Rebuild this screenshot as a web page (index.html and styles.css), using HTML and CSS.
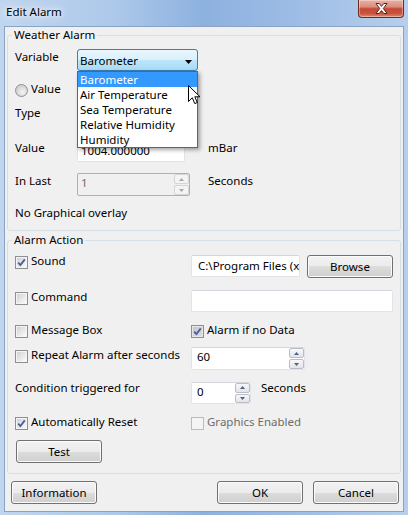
FILE: index.html
```html
<!DOCTYPE html>
<html>
<head>
<meta charset="utf-8">
<title>Edit Alarm</title>
<link rel="stylesheet" href="styles.css">
</head>
<body>
<div class="window">
  <div class="titlebar">
    <span class="title">Edit Alarm</span>
    <div class="close">
      <svg width="13" height="11" viewBox="0 0 13 11"><path d="M1 0.5H4.2L6.5 3.4L8.8 0.5H12L8.3 5.5L12 10.5H8.8L6.5 7.6L4.2 10.5H1L4.7 5.5Z" fill="#fff" stroke="#5b2218" stroke-width="1" stroke-linejoin="round"/></svg>
    </div>
  </div>
  <div class="client">
    <fieldset class="group g1">
      <legend>Weather Alarm</legend>
      <div class="row r-var">
        <span class="lbl">Variable</span>
        <div class="combo-wrap">
          <div class="combo"><span>Barometer</span><svg class="arrow" width="7" height="4" viewBox="0 0 7 4"><path d="M0 0H7L3.5 4Z" fill="#000"/></svg></div>
          <ul class="dropdown">
            <li class="sel">Barometer</li>
            <li>Air Temperature</li>
            <li>Sea Temperature</li>
            <li>Relative Humidity</li>
            <li>Humidity</li>
          </ul>
          <svg class="cursor" width="13" height="20" viewBox="0 0 13 20"><path d="M0.5 0.5V16.5L4.3 12.8L6.8 18.6L9.3 17.5L6.8 11.8H12Z" fill="#fff" stroke="#000" stroke-width="1" stroke-linejoin="miter"/></svg>
        </div>
      </div>
      <div class="row r-radio"><span class="radio"></span><span>Value</span></div>
      <div class="row r-type"><span class="lbl">Type</span></div>
      <div class="row r-value">
        <span class="lbl">Value</span>
        <div class="textbox tb-value">1004.000000</div>
        <span class="unit u-mbar">mBar</span>
      </div>
      <div class="row r-last">
        <span class="lbl">In Last</span>
        <div class="spin spin-last disabled">
          <span class="spin-text">1</span>
          <span class="spin-btns">
            <span class="sb"><svg width="5" height="3" viewBox="0 0 5 3"><path d="M0 3H5L2.5 0Z"/></svg></span>
            <span class="sb"><svg width="5" height="3" viewBox="0 0 5 3"><path d="M0 0H5L2.5 3Z"/></svg></span>
          </span>
        </div>
        <span class="unit u-sec">Seconds</span>
      </div>
      <div class="row r-nog">No Graphical overlay</div>
    </fieldset>

    <fieldset class="group g2">
      <legend>Alarm Action</legend>
      <div class="row r-sound">
        <label class="check c1"><span class="cb"><svg width="9" height="9" viewBox="0 0 9 9"><path d="M1.2 4.6L3.4 7L7.8 1.4" fill="none" stroke="#4a5f97" stroke-width="1.8"/></svg></span>Sound</label>
        <div class="textbox tb-sound">C:\Program Files (x</div>
        <div class="btn btn-browse">Browse</div>
      </div>
      <div class="row r-cmd">
        <label class="check c1"><span class="cb"></span>Command</label>
        <div class="textbox tb-cmd"></div>
      </div>
      <div class="row r-msg">
        <label class="check c1"><span class="cb"></span>Message Box</label>
        <label class="check"><span class="cb cb-grey"><svg width="9" height="9" viewBox="0 0 9 9"><path d="M1.2 4.6L3.4 7L7.8 1.4" fill="none" stroke="#4a5f97" stroke-width="1.8"/></svg></span>Alarm if no Data</label>
      </div>
      <div class="row r-rep">
        <label class="check c1"><span class="cb"></span>Repeat Alarm after seconds</label>
        <div class="spin spin-rep">
          <span class="spin-text">60</span>
          <span class="spin-btns">
            <span class="sb"><svg width="5" height="3" viewBox="0 0 5 3"><path d="M0 3H5L2.5 0Z"/></svg></span>
            <span class="sb"><svg width="5" height="3" viewBox="0 0 5 3"><path d="M0 0H5L2.5 3Z"/></svg></span>
          </span>
        </div>
      </div>
      <div class="row r-cond">
        <span class="c1">Condition triggered for</span>
        <div class="spin spin-cond">
          <span class="spin-text">0</span>
          <span class="spin-btns">
            <span class="sb"><svg width="5" height="3" viewBox="0 0 5 3"><path d="M0 3H5L2.5 0Z"/></svg></span>
            <span class="sb"><svg width="5" height="3" viewBox="0 0 5 3"><path d="M0 0H5L2.5 3Z"/></svg></span>
          </span>
        </div>
        <span class="unit u-sec2">Seconds</span>
      </div>
      <div class="row r-auto">
        <label class="check c1"><span class="cb"><svg width="9" height="9" viewBox="0 0 9 9"><path d="M1.2 4.6L3.4 7L7.8 1.4" fill="none" stroke="#4a5f97" stroke-width="1.8"/></svg></span>Automatically Reset</label>
        <label class="check disabled"><span class="cb cb-dis"></span>Graphics Enabled</label>
      </div>
      <div class="row r-test"><div class="btn btn-test">Test</div></div>
    </fieldset>

    <div class="buttons">
      <div class="btn">Information</div>
      <div class="spacer"></div>
      <div class="btn">OK</div>
      <div class="btn">Cancel</div>
    </div>
  </div>
</div>
</body>
</html>
```

FILE: styles.css
```css
* { box-sizing: border-box; }
html, body { margin: 0; padding: 0; }
body {
  font-family: "Noto Sans", "Open Sans", sans-serif;
  font-size: 11.5px;
  line-height: 15px;
  color: #000;
  background: #fff;
}
.window {
  width: 408px;
  height: 515px;
  display: flex;
  flex-direction: column;
  background: linear-gradient(90deg, #c0d6ef 0%, #adc8ea 28%, #8db1df 50%, #9dbce5 72%, #b7cfec 100%);
  overflow: hidden;
}
.titlebar {
  height: 26px;
  flex: none;
  display: flex;
  align-items: flex-start;
  padding: 0 4px 0 6px;
}
.title {
  margin-top: 4px;
  text-shadow: 0 0 5px #fff, 0 0 9px rgba(255,255,255,.9), 0 0 14px rgba(255,255,255,.7);
}
.close {
  margin-left: auto;
  width: 46px;
  height: 18px;
  border: 1px solid #6e2a20;
  border-top: none;
  border-radius: 0 0 4px 4px;
  background: linear-gradient(#eab1a6 0%, #dc8c7c 40%, #c44a35 52%, #c9513b 78%, #de8a6c 100%);
  box-shadow: inset 0 0 0 1px rgba(255,255,255,.35);
  display: flex;
  align-items: center;
  justify-content: center;
}
.client {
  flex: 1;
  margin: 0 4px 3px;
  background: #f0f0f0;
  border: 1px solid #8aa3c2;
  display: flex;
  flex-direction: column;
}
.group {
  margin: 0 2px;
  padding: 0 0 10px 7px;
  border: 1px solid #d5dfe5;
  border-radius: 3px;
  min-width: 0;
}
.group legend {
  margin-left: -3px;
  padding: 0 2px 2px;
  line-height: 15px;
}
.g2 { margin-top: 1px; }
.row {
  display: flex;
  align-items: flex-start;
  white-space: nowrap;
}
.lbl { width: 62px; flex: none; }
.unit { flex: none; }

/* group 1 rows */
.r-var { margin-top: 5px; height: 22px; }
.r-radio { margin-top: 10px; height: 15px; }
.r-type { margin-top: 9px; height: 15px; }
.r-value { margin-top: 20px; }
.r-last { margin-top: 11px; }
.r-nog { margin-top: 9px; height: 15px; }

.combo-wrap { position: relative; }
.combo {
  width: 121px;
  height: 22px;
  border: 1px solid #3c7fb1;
  border-radius: 3px;
  background: linear-gradient(#eaf6fd 0%, #d9f0fc 50%, #bee6fd 50%, #a7d9f5 100%);
  padding: 3px 5px 0 2px;
  display: flex;
  justify-content: space-between;
}
.combo .arrow { margin-top: 7px; }
.dropdown {
  position: absolute;
  left: 0;
  top: 22px;
  width: 121px;
  margin: 0;
  padding: 0;
  list-style: none;
  background: #fff;
  border: 1px solid #646464;
  box-shadow: 2px 2px 4px rgba(0,0,0,.35);
  z-index: 10;
}
.dropdown li { height: 15px; padding-left: 2px; }
.dropdown li.sel { background: #3399ff; color: #fff; }
.cursor { position: absolute; left: 111px; top: 36px; z-index: 11; }

.radio {
  width: 13px;
  height: 13px;
  margin: 3px 3px 0 0;
  border: 1px solid #8e8f8f;
  border-radius: 50%;
  background: radial-gradient(circle at 60% 65%, #f4f4f4 0%, #d8d8d8 55%, #c4c4c4 100%);
  flex: none;
}

.textbox {
  height: 22px;
  background: #fff;
  border: 1px solid #e2e3ea;
  border-top-color: #d3d6dc;
  border-radius: 2px;
  overflow: hidden;
  white-space: nowrap;
  flex: none;
}
.tb-value { width: 108px; padding: 2px 0 0 3px; }
.u-mbar { margin-left: 23px; }

.spin {
  display: flex;
  height: 23px;
  background: #fff;
  border: 1px solid #e2e3ea;
  border-top-color: #d3d6dc;
  border-radius: 2px;
  flex: none;
}
.spin-text { flex: 1; padding: 1px 0 0 5px; }
.spin-btns {
  display: flex;
  flex-direction: column;
  width: 15px;
  gap: 1px;
  flex: none;
}
.sb {
  flex: 1;
  border: 1px solid #b8bdc6;
  border-radius: 2px;
  background: linear-gradient(#f8f8f9, #e1e4ea);
  display: flex;
  align-items: center;
  justify-content: center;
}
.sb path { fill: #4d6088; }
.spin.disabled { background: #f0f0f0; border-color: #adb2b5; color: #6d6d6d; }
.spin.disabled .spin-text { padding-left: 3px; }
.spin.disabled .sb { border-color: #d5d5d5; background: #f4f4f4; }
.spin.disabled .sb path { fill: #a8a8a8; }
.spin-last { width: 113px; }
.u-sec { margin-left: 18px; }

/* group 2 rows */
.c1 { width: 176px; flex: none; }
.check {
  display: flex;
  align-items: flex-start;
  height: 15px;
  white-space: nowrap;
}
.check.disabled { color: #6d6d6d; }
.cb {
  width: 13px;
  height: 13px;
  margin: 3px 3px 0 0;
  border: 1px solid #8e8f8f;
  padding: 1px;
  background: linear-gradient(135deg, #cfd2d6 0%, #eeeeef 70%, #fbfbfb 100%) content-box, #f4f4f4;
  display: flex;
  align-items: center;
  justify-content: center;
  flex: none;
}
.cb svg { flex: none; }
.cb-grey { background: linear-gradient(135deg, #c4c6c9, #dcdddf) content-box, #e6e6e6; }
.cb-dis { border-color: #bcbcbc; background: #f4f4f4; }

.r-sound { margin-top: 4px; }
.tb-sound { width: 109px; margin-top: 2px; padding: 2px 0 0 6px; }
.btn-browse { margin-left: 7px; margin-top: 2px; width: 85px; }
.r-cmd { margin-top: 11px; }
.tb-cmd { width: 202px; margin-top: 1px; }
.r-msg { margin-top: 10px; height: 15px; }
.r-rep { margin-top: 10px; }
.spin-rep { width: 114px; }
.r-cond { margin-top: 10px; }
.spin-cond { width: 60px; height: 22px; margin-top: 2px; }
.spin-cond .spin-text, .spin-rep .spin-text { padding-left: 5px; }
.u-sec2 { margin-left: 10px; }
.r-auto { margin-top: 10px; height: 15px; }
.r-test { margin-top: 11px; }
.btn-test { margin-left: 1px; }

.btn {
  width: 86px;
  height: 23px;
  border: 1px solid #707070;
  border-radius: 3px;
  background: linear-gradient(#f2f2f2 0%, #ebebeb 50%, #dddddd 50%, #cfcfcf 100%);
  box-shadow: inset 0 0 0 1px #fbfbfb;
  display: flex;
  align-items: center;
  justify-content: center;
  flex: none;
}
.buttons {
  display: flex;
  gap: 10px;
  margin-top: 7px;
  padding: 0 4px 0 6px;
}
.spacer { flex: 1; }
```
